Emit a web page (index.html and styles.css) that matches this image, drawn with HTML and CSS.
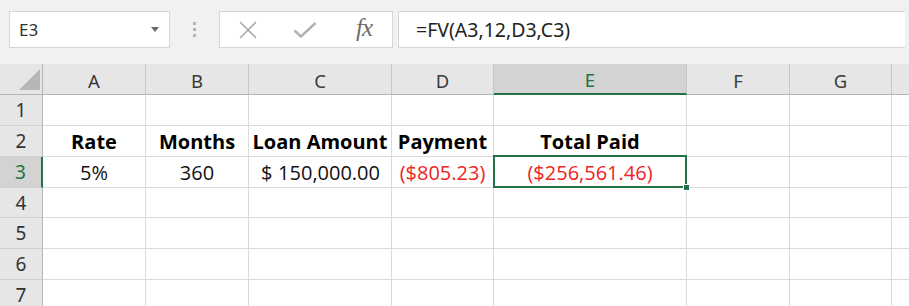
FILE: index.html
```html
<!DOCTYPE html>
<html>
<head>
<meta charset="utf-8">
<link rel="stylesheet" href="styles.css">
</head>
<body>
<div class="toolbar">
  <div class="namebox">
    <span class="nb-text">E3</span>
    <span class="nb-arrow"></span>
  </div>
  <div class="grip"><i></i><i></i><i></i></div>
  <div class="iconbox">
    <span class="ic">
      <svg width="20" height="18" viewBox="0 0 20 18"><path d="M2 1 L18 17 M18 1 L2 17" stroke="#aaaaaa" stroke-width="1.6" fill="none"/></svg>
    </span>
    <span class="ic">
      <svg width="24" height="16" viewBox="0 0 24 16"><path d="M1.5 8.5 L8 14.5 L22.5 1" stroke="#b0b0b0" stroke-width="2.4" fill="none"/></svg>
    </span>
    <span class="ic fx">fx</span>
  </div>
  <div class="formula">=FV(A3,12,D3,C3)</div>
</div>
<div class="sheet">
  <div class="hd corner"><span class="tri"></span></div>
  <div class="hd col">A</div>
  <div class="hd col">B</div>
  <div class="hd col">C</div>
  <div class="hd col">D</div>
  <div class="hd col sel-col">E</div>
  <div class="hd col">F</div>
  <div class="hd col">G</div>
  <div class="hd col last"></div>

  <div class="hd row">1</div>
  <div class="c"></div><div class="c"></div><div class="c"></div><div class="c"></div><div class="c"></div><div class="c"></div><div class="c"></div><div class="c last"></div>

  <div class="hd row">2</div>
  <div class="c b">Rate</div><div class="c b">Months</div><div class="c b">Loan Amount</div><div class="c b">Payment</div><div class="c b">Total Paid</div><div class="c"></div><div class="c"></div><div class="c last"></div>

  <div class="hd row sel-row">3</div>
  <div class="c">5%</div><div class="c">360</div><div class="c acct"><span>$</span><span>150,000.00</span></div><div class="c neg">($805.23)</div><div class="c neg active">($256,561.46)<span class="handle"></span></div><div class="c"></div><div class="c"></div><div class="c last"></div>

  <div class="hd row">4</div>
  <div class="c"></div><div class="c"></div><div class="c"></div><div class="c"></div><div class="c"></div><div class="c"></div><div class="c"></div><div class="c last"></div>

  <div class="hd row">5</div>
  <div class="c"></div><div class="c"></div><div class="c"></div><div class="c"></div><div class="c"></div><div class="c"></div><div class="c"></div><div class="c last"></div>

  <div class="hd row">6</div>
  <div class="c"></div><div class="c"></div><div class="c"></div><div class="c"></div><div class="c"></div><div class="c"></div><div class="c"></div><div class="c last"></div>

  <div class="hd row">7</div>
  <div class="c"></div><div class="c"></div><div class="c"></div><div class="c"></div><div class="c"></div><div class="c"></div><div class="c"></div><div class="c last"></div>
</div>
</body>
</html>
```

FILE: styles.css
```css
* { box-sizing: border-box; }
html, body { margin: 0; padding: 0; }
body {
  width: 909px;
  height: 306px;
  overflow: hidden;
  background: #f1f1f1;
  font-family: "Noto Sans", "Open Sans", sans-serif;
}

.toolbar {
  height: 64px;
  display: flex;
  align-items: flex-start;
  padding-top: 11px;
  padding-left: 9px;
}
.namebox {
  width: 161px;
  height: 37px;
  background: #fff;
  border: 1px solid #d6d6d6;
  display: flex;
  align-items: center;
  justify-content: space-between;
  padding: 0 10px 0 9px;
}
.nb-text { font-size: 17px; color: #333; }
.nb-arrow {
  width: 0; height: 0;
  border-left: 4px solid transparent;
  border-right: 4px solid transparent;
  border-top: 5px solid #6a6a6a;
}
.grip {
  width: 49px;
  height: 37px;
  display: flex;
  flex-direction: column;
  align-items: center;
  justify-content: center;
  gap: 3px;
}
.grip i {
  display: block;
  width: 3px; height: 3px;
  background: #b5b5b5;
}
.iconbox {
  width: 174px;
  height: 37px;
  background: #fff;
  border: 1px solid #d6d6d6;
  display: grid;
  grid-template-columns: 56px 58px 60px;
  align-items: center;
}
.ic { display: flex; justify-content: center; align-items: center; }
.fx {
  font-family: "Liberation Serif", "DejaVu Serif", serif;
  font-style: italic;
  font-size: 25px;
  color: #6e6e6e;
  letter-spacing: -1px;
  margin-top: -3px;
  padding-left: 0;
}
.formula {
  margin-left: 5px;
  width: 507px;
  height: 37px;
  background: #fff;
  border: 1px solid #d6d6d6;
  border-right: none;
  font-size: 19.5px;
  color: #222;
  display: flex;
  align-items: center;
  padding-left: 17px;
}

.sheet {
  display: grid;
  grid-template-columns: 43px 103px 103px 143px 102px 193px 103px 102px 1fr;
  grid-template-rows: 31px 31px 31px 31px 30px 31px 31px 31px;
  background: #fff;
}
.hd {
  background: #e6e6e6;
  color: #3a3a3a;
  font-size: 18.5px;
  display: flex;
  align-items: center;
  justify-content: center;
  border-right: 1px solid #c6c6c6;
  border-bottom: 1px solid #c6c6c6;
}
.hd.col { border-bottom: 1px solid #b4b4b4; padding-top: 2px; }
.hd.row { border-right: 1px solid #b4b4b4; border-bottom-color: #d0d0d0; font-size: 19px; color: #333; }
.hd.last { border-right: none; }
.corner { position: relative; border-right: 1px solid #b4b4b4; border-bottom: 1px solid #b4b4b4; }
.tri {
  position: absolute;
  right: 2px;
  bottom: 4px;
  width: 0; height: 0;
  border-left: 21px solid transparent;
  border-bottom: 21px solid #b6b6b6;
}
.sel-col {
  background: #d3d3d3;
  color: #217346;
  border-bottom: 2px solid #217346 !important;
}
.sel-row {
  background: #d3d3d3;
  color: #217346 !important;
  border-right: 2px solid #217346 !important;
}

.c {
  border-right: 1px solid #dadada;
  border-bottom: 1px solid #dadada;
  font-family: "Open Sans", "Lato", sans-serif;
  font-size: 20px;
  line-height: 20px;
  color: #111;
  display: flex;
  align-items: flex-end;
  justify-content: center;
  padding-bottom: 4px;
  white-space: nowrap;
}
.c.last { border-right: none; }
.c.b { font-weight: bold; color: #000; }
.c.neg { color: #ee2424; }
.c.acct { justify-content: space-between; padding-left: 12px; padding-right: 11px; }
.c.active { position: relative; }
.c.active::after {
  content: "";
  position: absolute;
  top: -2px;
  left: -1px;
  right: -1px;
  bottom: -1px;
  border: 2px solid #217346;
  pointer-events: none;
}
.handle {
  position: absolute;
  right: -4px;
  bottom: -4px;
  width: 7px;
  height: 7px;
  background: #217346;
  border: 1px solid #fff;
  z-index: 2;
}
```
